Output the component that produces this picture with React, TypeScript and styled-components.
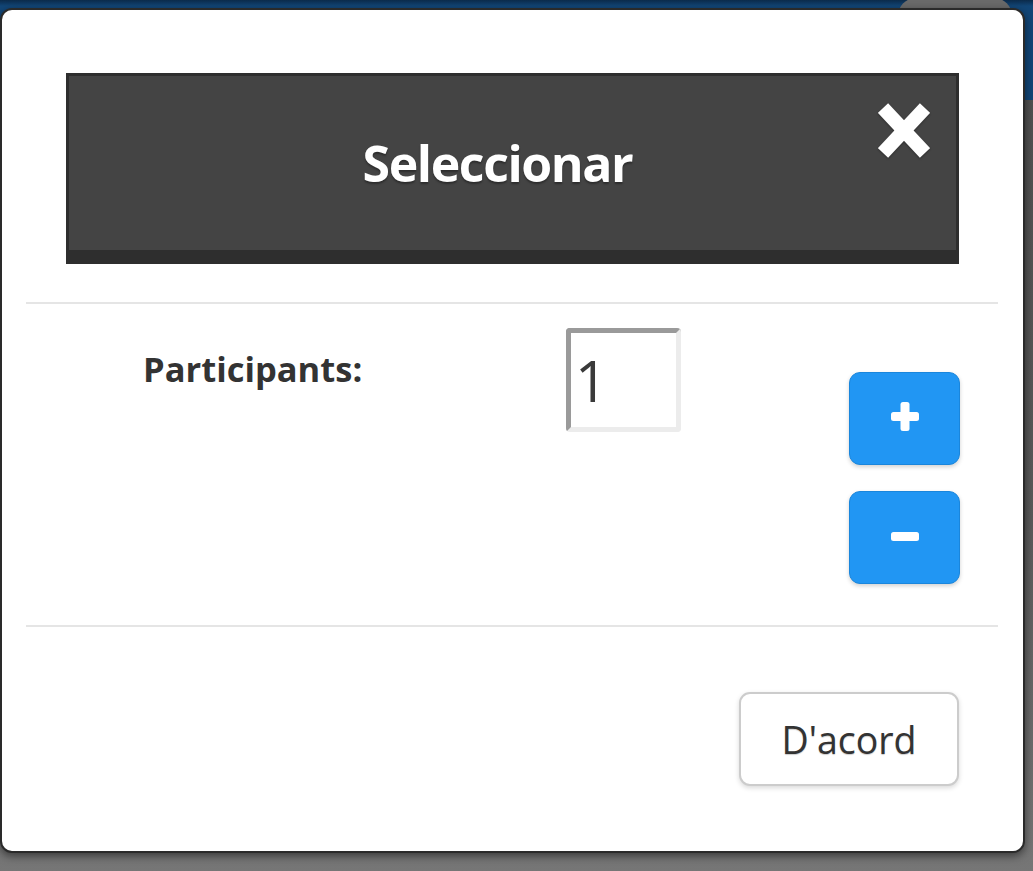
import React from "react";
import styled, { createGlobalStyle } from "styled-components";

const Global = createGlobalStyle`
  html, body { margin: 0; padding: 0; }
  body {
    font-family: "Open Sans", "Noto Sans", Arial, sans-serif;
    background: #5e5e5e;
  }
  * { box-sizing: border-box; }
`;

const Screen = styled.div`
  position: relative;
  width: 1033px;
  height: 871px;
  overflow: hidden;
  padding-top: 8px;
  background:
    linear-gradient(to bottom, #0b2a4a 0, #124677 6px, #124677 100px, rgba(0,0,0,0) 100px),
    linear-gradient(to bottom, #4e4e4e 0, #5a5a5a 60%, #767676 100%);

  &::before {
    content: "";
    position: absolute;
    left: 898px;
    top: -2px;
    width: 114px;
    height: 40px;
    border-radius: 18px;
    background: #6a6a6a;
  }
`;

const Modal = styled.div`
  position: relative;
  z-index: 1;
  width: 1025px;
  background: #fff;
  border: 2px solid #2a2a2a;
  border-radius: 12px;
  box-shadow: 0 3px 9px rgba(0, 0, 0, 0.5);
`;

const HeaderWrap = styled.div`
  padding: 63px 64px 0 64px;
`;

const HeaderBox = styled.div`
  position: relative;
  height: 191px;
  background: #444444;
  border: 3px solid #2e2e2e;
  border-bottom-width: 14px;
  display: flex;
  align-items: center;
  justify-content: center;
`;

const Title = styled.h1`
  margin: 0;
  padding-right: 30px;
  color: #fff;
  font-family: "Open Sans", "Noto Sans", Arial, sans-serif;
  font-weight: 700;
  font-size: 50px;
  letter-spacing: -1.4px;
  line-height: 1;
  text-shadow: 0 2px 2px rgba(0, 0, 0, 0.35);
`;

const CloseButton = styled.button`
  position: absolute;
  top: 27px;
  right: 26px;
  width: 52px;
  height: 55px;
  padding: 0;
  border: 0;
  background: transparent;
  display: block;
  cursor: pointer;
  filter: drop-shadow(0 1px 1px rgba(0, 0, 0, 0.35));
`;

const Divider = styled.hr`
  margin: 0 25px 0 24px;
  height: 2px;
  border: 0;
  background: #e5e5e5;
`;

const Section = styled.div`
  margin-top: 38px;
`;

const Body = styled.div`
  display: flex;
  align-items: flex-start;
  padding: 24px 63px 41px 141px;
`;

const Label = styled.label`
  width: 423px;
  margin-top: 18px;
  font-size: 34.5px;
  font-weight: 700;
  line-height: 46px;
  color: #333;
`;

const CountInput = styled.input`
  width: 115px;
  height: 104px;
  padding: 0 0 0 4px;
  border-style: solid;
  border-width: 5px;
  border-color: #9a9a9a #ececec #ececec #9a9a9a;
  border-radius: 4px;
  background: #fff;
  font-family: "Open Sans", "Noto Sans", Arial, sans-serif;
  font-size: 57px;
  font-weight: 400;
  color: #3a3a3a;
  outline: none;
`;

const Stepper = styled.div`
  margin-left: auto;
  margin-top: 44px;
  display: flex;
  flex-direction: column;
  gap: 26px;
`;

const StepButton = styled.button<{ $lift?: number }>`
  width: 111px;
  height: 93px;
  display: flex;
  align-items: center;
  justify-content: center;
  padding: 0 0 ${(p) => p.$lift ?? 0}px 0;
  background: #2196f3;
  border: 1px solid #1a86dc;
  border-radius: 11px;
  box-shadow: 0 2px 4px rgba(0, 0, 0, 0.18);
  cursor: pointer;
`;

const Footer = styled.div`
  display: flex;
  justify-content: flex-end;
  padding: 65px 64px 65px 0;
`;

const OkButton = styled.button`
  width: 220px;
  height: 94px;
  background: #fff;
  border: 2px solid #cccccc;
  border-radius: 11px;
  box-shadow: 0 2px 5px rgba(0, 0, 0, 0.15);
  font-family: "Open Sans", "Noto Sans", Arial, sans-serif;
  font-size: 37.5px;
  font-weight: 400;
  color: #333;
  text-shadow: 0 1px 1px rgba(0, 0, 0, 0.2);
  cursor: pointer;
`;

const CloseIcon = () => (
  <svg width="52" height="55" viewBox="0 0 52 55">
    <g stroke="#fff" strokeWidth="14" strokeLinecap="butt">
      <line x1="5" y1="5" x2="47" y2="50" />
      <line x1="47" y1="5" x2="5" y2="50" />
    </g>
  </svg>
);

const PlusIcon = () => (
  <svg width="28" height="29" viewBox="0 0 28 29">
    <rect x="0" y="10" width="28" height="9" rx="2.5" fill="#fff" />
    <rect x="9.5" y="0" width="9" height="29" rx="2.5" fill="#fff" />
  </svg>
);

const MinusIcon = () => (
  <svg width="28" height="9" viewBox="0 0 28 9">
    <rect x="0" y="0" width="28" height="9" rx="2.5" fill="#fff" />
  </svg>
);

export default function App() {
  return (
    <>
      <Global />
      <Screen>
        <Modal>
          <HeaderWrap>
            <HeaderBox>
              <Title>Seleccionar</Title>
              <CloseButton aria-label="Tancar">
                <CloseIcon />
              </CloseButton>
            </HeaderBox>
          </HeaderWrap>
          <Section>
            <Divider />
            <Body>
              <Label htmlFor="participants">Participants:</Label>
              <CountInput id="participants" value="1" readOnly />
              <Stepper>
                <StepButton $lift={4} aria-label="Afegir">
                  <PlusIcon />
                </StepButton>
                <StepButton $lift={2} aria-label="Treure">
                  <MinusIcon />
                </StepButton>
              </Stepper>
            </Body>
            <Divider />
          </Section>
          <Footer>
            <OkButton>D'acord</OkButton>
          </Footer>
        </Modal>
      </Screen>
    </>
  );
}
